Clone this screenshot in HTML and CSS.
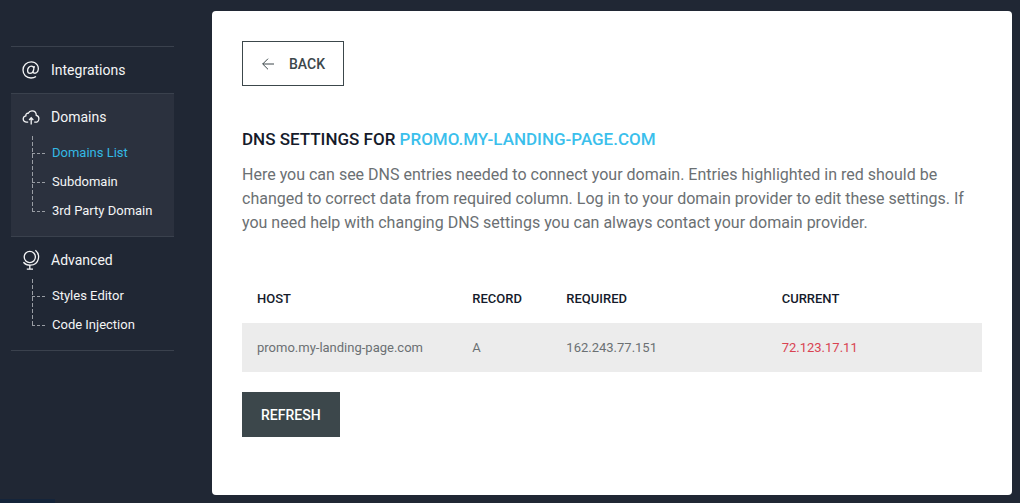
FILE: index.html
```html
<!DOCTYPE html>
<html lang="en">
<head>
<meta charset="utf-8">
<title>DNS Settings</title>
<link rel="stylesheet" href="styles.css">
</head>
<body>
<div class="layout">
  <nav class="sidebar" aria-label="Settings">
    <section class="group">
      <a class="group-title" href="#">
        <svg class="icon" viewBox="0 0 18 18"><path d="M12.4 5.2 11.2 10.6C10.8 12.6 14.2 13 15.7 10.4 17.9 5 13.8 .9 9.2 .9 4.6 .9 1 4.5 1 9.1 1 13.7 4.4 17 9 17 11 17 12.6 16.5 14 15.5M11.9 7.6C11.7 6 10.7 5.2 9.3 5.2 7.2 5.2 5.6 7.2 5.6 9.5 5.6 11.3 6.5 12.4 8 12.4 9.8 12.4 11 11.3 11.4 9.6"/></svg>
        <span>Integrations</span>
      </a>
    </section>
    <section class="group group-open">
      <a class="group-title" href="#">
        <svg class="icon" viewBox="0 0 18 18"><path d="M6.2 14.2H4.6C2.7 14.2 1.2 12.8 1.2 11 1.2 9.3 2.3 8.1 3.9 7.8 3.6 6.2 4.7 5.1 6.2 5.3 7 3.7 8.3 2.9 10 2.9 12.6 2.9 14.3 4.8 14.3 7.4 15.9 7.8 16.9 9.1 16.9 10.7 16.9 12.7 15.4 14.2 13.4 14.2H12.2M9.2 16.5V10M7.1 12 9.2 9.8 11.3 12"/></svg>
        <span>Domains</span>
      </a>
      <ul class="tree">
        <li><a class="current" href="#" aria-current="page">Domains List</a></li>
        <li><a href="#">Subdomain</a></li>
        <li><a href="#">3rd Party Domain</a></li>
      </ul>
    </section>
    <section class="group">
      <a class="group-title" href="#">
        <svg class="icon icon-tall" viewBox="0 0 18 22"><circle cx="7.8" cy="8" r="5.6"/><path d="M13.4 1.2C18.6 5.4 17.6 15.8 8.4 16.2 5.4 16.3 3 15 1.4 13.2M7.8 16.2V20M4.8 20.2H11"/></svg>
        <span>Advanced</span>
      </a>
      <ul class="tree">
        <li><a href="#">Styles Editor</a></li>
        <li><a href="#">Code Injection</a></li>
      </ul>
    </section>
  </nav>
  <main class="panel">
    <button class="button button-outline" type="button">
      <svg class="arrow" viewBox="0 0 12 12"><path d="M12 6H.7M6 .7.7 6 6 11.3"/></svg>
      <span>BACK</span>
    </button>
    <h1 class="title">DNS SETTINGS FOR <span class="domain">PROMO.MY-LANDING-PAGE.COM</span></h1>
    <p class="intro">Here you can see DNS entries needed to connect your domain. Entries highlighted in red should be changed to correct data from required column. Log in to your domain provider to edit these settings. If you need help with changing DNS settings you can always contact your domain provider.</p>
    <table class="records">
      <thead>
        <tr><th scope="col">HOST</th><th class="narrow" scope="col">RECORD</th><th scope="col">REQUIRED</th><th scope="col">CURRENT</th></tr>
      </thead>
      <tbody>
        <tr><td>promo.my-landing-page.com</td><td>A</td><td>162.243.77.151</td><td class="wrong">72.123.17.11</td></tr>
      </tbody>
    </table>
    <button class="button button-solid" type="button">REFRESH</button>
  </main>
</div>
<div class="status"></div>
</body>
</html>
```
FILE: styles.css
```css
* { box-sizing: border-box; }
body {
  margin: 0;
  background: #202734;
  color: #6b7073;
  font-family: Roboto, "Liberation Sans", sans-serif;
}
.layout {
  display: flex;
  align-items: stretch;
  min-height: 100vh;
  padding: 11px 8px 8px 11px;
}
.sidebar {
  flex: 0 0 163px;
  margin-right: 38px;
  padding-top: 35px;
}
.sidebar a { color: #f4f5f6; text-decoration: none; }
.group { border-top: 1px solid #3a414d; }
.group:last-child { border-bottom: 1px solid #3a414d; }
.group-open { background: #2b313e; }
.group-title {
  display: flex;
  align-items: center;
  gap: 11px;
  height: 46px;
  padding-left: 11px;
  font-size: 14px;
}
.icon {
  width: 18px;
  height: 18px;
  fill: none;
  stroke: #f4f5f6;
  stroke-width: 1.3;
}
.icon-tall { height: 22px; }
.tree {
  margin: -4px 0 0 21px;
  padding: 2px 0 11px;
  list-style: none;
  background: repeating-linear-gradient(to bottom, #999da4 0 4px, transparent 4px 6px) 0 0 / 1px calc(100% - 24px) no-repeat;
}
.tree li {
  display: flex;
  align-items: center;
  height: 29px;
  font-size: 13px;
  background: repeating-linear-gradient(to right, #999da4 0 3px, transparent 3px 5px) 0 15px / 13px 1px no-repeat;
}
.tree a { padding-left: 20px; }
.sidebar .current { color: #34b9e4; }
.panel {
  flex: 1;
  padding: 30px;
  border-radius: 4px;
  background: #fff;
}
.button {
  display: inline-flex;
  align-items: center;
  height: 45px;
  padding: 0 18px;
  border: 1px solid #3c474b;
  font: 500 14px Roboto, "Liberation Sans", sans-serif;
}
.button-outline { gap: 15px; background: #fff; color: #3c474b; }
.button-solid { background: #3c474b; color: #fff; }
.arrow {
  width: 12px;
  height: 12px;
  margin-left: 1px;
  fill: none;
  stroke: #3c474b;
}
.title {
  margin: 41px 0 12px;
  color: #151b2b;
  font-size: 17px;
  font-weight: 500;
  line-height: 24px;
}
.domain { color: #3bbfec; }
.intro {
  margin: 0;
  font-size: 16px;
  line-height: 24px;
}
.records {
  width: 100%;
  margin: 39px 0 20px;
  border-collapse: collapse;
  table-layout: fixed;
  font-size: 13px;
}
.records th, .records td {
  height: 49px;
  padding: 0 0 0 15px;
  text-align: left;
}
.records th { color: #151b2b; font-weight: 500; }
.records td { background: #ececec; }
.records .wrong { color: #d94352; }
.records .narrow { width: 94px; }
.status {
  position: fixed;
  left: 0;
  bottom: 0;
  width: 55px;
  height: 4px;
  background: #14243a;
}
```
